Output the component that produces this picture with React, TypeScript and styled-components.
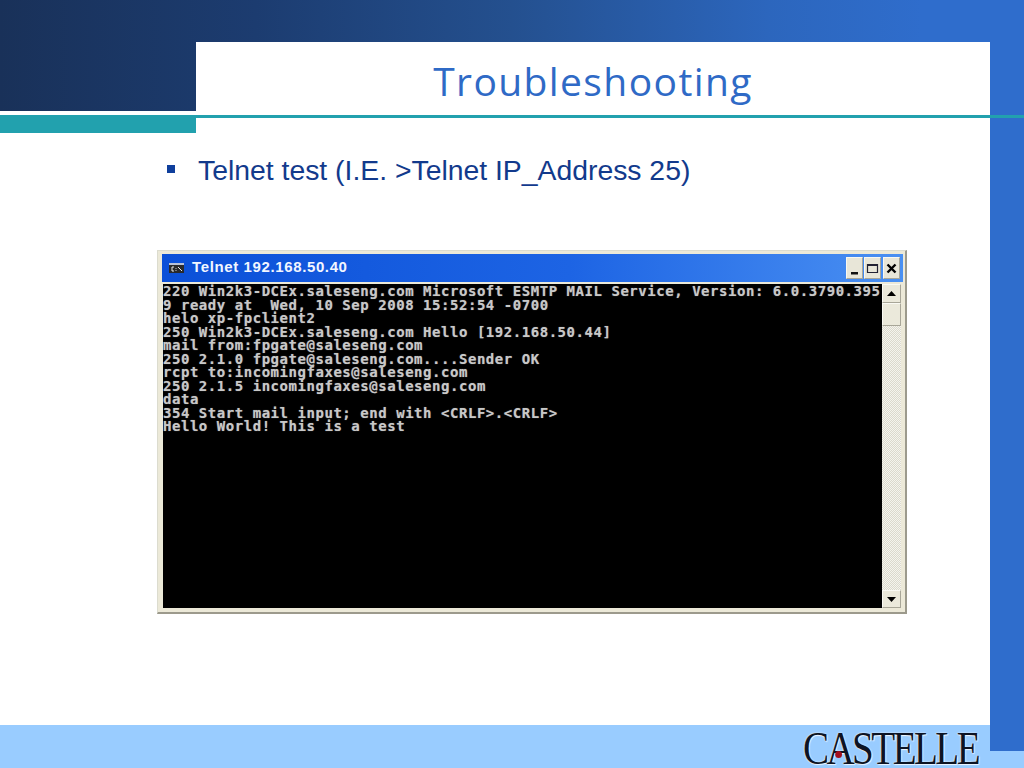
import React from "react";
import styled, { createGlobalStyle } from "styled-components";

const Global = createGlobalStyle`
  html, body { margin: 0; padding: 0; background: #fff; }
`;

const Slide = styled.div`
  width: 1024px;
  height: 768px;
  display: flex;
  flex-direction: column;
  overflow: hidden;
  background: #fff;
`;

const Header = styled.header`
  height: 111px;
  display: grid;
  grid-template-columns: 196px 1fr 34px;
  grid-template-rows: 42px 69px;
  background: linear-gradient(90deg, #193159 0%, #1c3c70 25%, #24508f 50%, #2c66bd 75%, #2f6dcc 90%, #2f6dcc 100%);
`;

const TitleCell = styled.div`
  grid-column: 2;
  grid-row: 2;
  background: #fff;
  display: flex;
  align-items: flex-start;
  justify-content: center;
  padding-top: 12px;
`;

const Title = styled.h1`
  margin: 0;
  font: 400 39px/54px "Open Sans", sans-serif;
  letter-spacing: 1.4px;
  color: #2f6ac6;
`;

const Body = styled.main`
  position: relative;
  height: 614px;
  display: flex;
`;

const Accent = styled.div`
  position: absolute;
  left: 0;
  right: 0;
  top: 4px;
  height: 3px;
  background: #22a1ae;
`;

const Content = styled.div`
  flex: 1;
  display: flex;
  flex-direction: column;
`;

const Tab = styled.div`
  width: 196px;
  height: 18px;
  margin-top: 4px;
  background: #22a1ae;
`;

const Bullet = styled.div`
  display: flex;
  align-items: center;
  margin: 19px 0 0 167px;
  gap: 23px;
  font: 400 28.35px/36px "Liberation Sans", Arial, sans-serif;
  color: #123a8c;
  &::before {
    content: "";
    width: 8px;
    height: 8px;
    background: #0f3f9c;
    margin-top: -2px;
  }
`;

const Rail = styled.div`
  width: 34px;
  background: #2f6dcc;
`;

const Terminal = styled.section`
  width: 750px;
  height: 364px;
  margin: 62px 0 0 157px;
  box-sizing: border-box;
  padding: 3px 2px 4px 4px;
  background: #ece9d8;
  border: 1px solid #dcdccf;
  border-right: 2px solid #9c9a8c;
  border-bottom: 2px solid #9c9a8c;
  display: flex;
  flex-direction: column;
`;

const TitleBar = styled.div`
  height: 28px;
  flex: none;
  background: linear-gradient(90deg, #0b50d8 0%, #1d64e4 55%, #4a90f2 100%);
  display: flex;
  align-items: center;
  padding: 0 3px 0 7px;
`;

const TitleText = styled.span`
  flex: 1;
  margin: 0 0 3px 8px;
  font: 700 15px "Liberation Sans", Arial, sans-serif;
  letter-spacing: 0.62px;
  color: #f2f6ff;
`;

const WinButton = styled.div<{ $gap: number }>`
  width: 17px;
  height: 22px;
  margin-left: ${(p) => p.$gap}px;
  background: #e8e6d8;
  border-top: 1px solid #f8f8f0;
  border-left: 1px solid #f8f8f0;
  border-right: 1px solid #a8a698;
  border-bottom: 1px solid #a8a698;
  box-sizing: border-box;
  display: flex;
  align-items: center;
  justify-content: center;
`;

const Console = styled.div`
  flex: 1;
  display: flex;
  min-height: 0;
  margin: 2px 2px 0 1px;
`;

const Screen = styled.pre`
  flex: 1;
  margin: 0;
  padding: 1px 0 0 0;
  background: #000;
  color: #c8c8c8;
  font: 700 14px/13.5px "DejaVu Sans Mono", monospace;
  letter-spacing: 0.54px;
  text-shadow: 0 0 1px rgba(200, 200, 200, 0.55);
  overflow: hidden;
`;

const Scrollbar = styled.div`
  width: 19px;
  display: flex;
  flex-direction: column;
  background-color: #f4f3ec;
  background-image: repeating-conic-gradient(#dbd9cd 0% 25%, #f5f4ee 0% 50%);
  background-size: 2px 2px;
`;

const ScrollSpacer = styled.div`
  flex: 1;
`;

const ScrollBtn = styled.div<{ $h: number }>`
  height: ${(p) => p.$h}px;
  box-sizing: border-box;
  background: #ebe9db;
  border-top: 1px solid #fafaf4;
  border-left: 1px solid #fafaf4;
  border-right: 1px solid #a8a698;
  border-bottom: 1px solid #a8a698;
  display: flex;
  align-items: center;
  justify-content: center;
`;

const Footer = styled.footer`
  height: 43px;
  background: #99ccff;
  display: flex;
  justify-content: flex-end;
  align-items: flex-start;
  gap: 12px;
`;

const Logo = styled.div`
  position: relative;
  margin-top: 5px;
  font: 400 46px/38px "Liberation Serif", serif;
  letter-spacing: -3px;
  color: #0d1424;
  text-shadow: 0 0 2px #fff, 1px 1px 1px #e8f2ff;
  transform: scaleX(0.85);
  transform-origin: right center;
`;

const LogoDot = styled.span`
  position: absolute;
  left: 38px;
  top: 21px;
  width: 8px;
  height: 7px;
  border-radius: 50%;
  background: #a3101f;
`;

const RailStub = styled.div`
  width: 34px;
  height: 26px;
  background: #2f6dcc;
`;

const Icon = () => (
  <svg width="15" height="10" viewBox="0 0 15 10">
    <rect width="15" height="10" fill="#2a2a2a" />
    <rect width="15" height="2" fill="#b9c2d6" />
    <path d="M5 4H3v4h2M7 5v.8M7 7.2V8M9 4l4 4" stroke="#e8e8e8" strokeWidth="1" fill="none" />
  </svg>
);

const lines = `220 Win2k3-DCEx.saleseng.com Microsoft ESMTP MAIL Service, Version: 6.0.3790.395
9 ready at  Wed, 10 Sep 2008 15:52:54 -0700
helo xp-fpclient2
250 Win2k3-DCEx.saleseng.com Hello [192.168.50.44]
mail from:fpgate@saleseng.com
250 2.1.0 fpgate@saleseng.com....Sender OK
rcpt to:incomingfaxes@saleseng.com
250 2.1.5 incomingfaxes@saleseng.com
data
354 Start mail input; end with <CRLF>.<CRLF>
Hello World! This is a test`;

export default function App() {
  return (
    <Slide>
      <Global />
      <Header>
        <TitleCell>
          <Title>Troubleshooting</Title>
        </TitleCell>
      </Header>
      <Body>
        <Accent />
        <Content>
          <Tab />
          <Bullet>Telnet test (I.E. &gt;Telnet IP_Address 25)</Bullet>
          <Terminal>
            <TitleBar>
              <Icon />
              <TitleText>Telnet 192.168.50.40</TitleText>
              <WinButton $gap={0}>
                <svg width="11" height="13" viewBox="0 0 11 13"><rect x="2" y="10" width="7" height="2.5" fill="#111" /></svg>
              </WinButton>
              <WinButton $gap={1}>
                <svg width="13" height="13" viewBox="0 0 13 13"><path d="M1.5 2.5h10v8h-10z" fill="none" stroke="#223" strokeWidth="1.2" /><rect x="1" y="2" width="11" height="2" fill="#223" /></svg>
              </WinButton>
              <WinButton $gap={2}>
                <svg width="11" height="11" viewBox="0 0 11 11"><path d="M1.5 1.5l8 8M9.5 1.5l-8 8" stroke="#000" strokeWidth="2.4" /></svg>
              </WinButton>
            </TitleBar>
            <Console>
              <Screen>{lines}</Screen>
              <Scrollbar>
                <ScrollBtn $h={19}>
                  <svg width="9" height="5" viewBox="0 0 9 5"><path d="M4.5 0L9 5H0z" fill="#000" /></svg>
                </ScrollBtn>
                <ScrollBtn $h={23} />
                <ScrollSpacer />
                <ScrollBtn $h={18}>
                  <svg width="9" height="5" viewBox="0 0 9 5"><path d="M0 0h9L4.5 5z" fill="#000" /></svg>
                </ScrollBtn>
              </Scrollbar>
            </Console>
          </Terminal>
        </Content>
        <Rail />
      </Body>
      <Footer>
        <Logo>
          CASTELLE
          <LogoDot />
        </Logo>
        <RailStub />
      </Footer>
    </Slide>
  );
}
